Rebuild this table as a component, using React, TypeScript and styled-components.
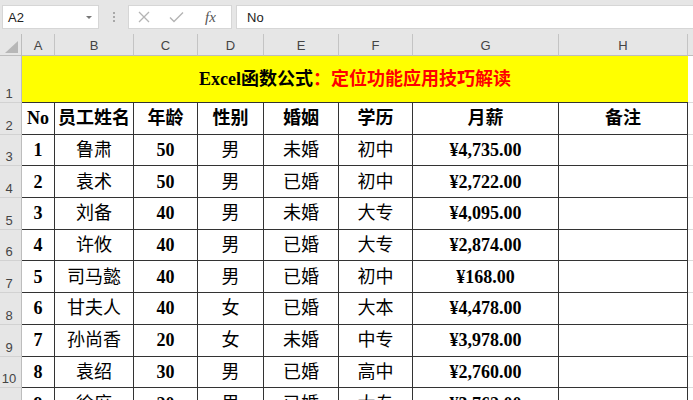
import React from "react";
import styled, { createGlobalStyle } from "styled-components";

const GlobalStyle = createGlobalStyle`
  html, body { margin: 0; padding: 0; background: #fff; }
  body {
    width: 693px; height: 400px; overflow: hidden;
    font-family: "Liberation Sans", Arial, sans-serif;
  }
  * { box-sizing: border-box; }
`;

const COLS = "22px 33px 79px 64px 66px 75px 74px 146px 129px 1fr";
const CELL_FONT = `"Liberation Serif", "Noto Sans CJK SC", serif`;

const Sheet = styled.div`
  width: 693px;
  height: 400px;
  overflow: hidden;
  background: #fff;
  display: flex;
  flex-direction: column;
`;

const FormulaBar = styled.div`
  flex: none;
  height: 34px;
  background: #e6e6e6;
  display: flex;
  align-items: flex-start;
  padding: 5px 0 0 2px;
`;

const NameBox = styled.div`
  width: 97px;
  height: 24px;
  background: #fff;
  border: 1px solid #d6d6d6;
  display: flex;
  align-items: center;
  justify-content: space-between;
  padding: 0 6px 0 5px;
  font-size: 13px;
  color: #222;
`;

const Caret = styled.span`
  width: 0;
  height: 0;
  border-left: 3px solid transparent;
  border-right: 3px solid transparent;
  border-top: 3px solid #777;
`;

const Grip = styled.div`
  width: 29px;
  height: 24px;
  display: flex;
  flex-direction: column;
  align-items: center;
  justify-content: center;
  gap: 2px;
`;

const GripDot = styled.span`
  width: 2px;
  height: 2px;
  background: #a8a8a8;
`;

const FxBox = styled.div`
  width: 104px;
  height: 24px;
  background: #fff;
  border: 1px solid #d6d6d6;
  display: flex;
  align-items: center;
  padding: 0 0 0 9px;
  gap: 19px;
`;

const FxLabel = styled.span`
  font-family: "Liberation Serif", serif;
  font-style: italic;
  font-size: 15px;
  color: #555;
  margin-left: 2px;
`;

const FormulaInput = styled.div`
  flex: 1;
  height: 24px;
  margin-left: 4px;
  background: #fff;
  border: 1px solid #d6d6d6;
  border-right: none;
  display: flex;
  align-items: center;
  padding-left: 10px;
  font-size: 13px;
  color: #222;
`;

const GridRow = styled.div<{ $h: number }>`
  flex: none;
  display: grid;
  grid-template-columns: ${COLS};
  height: ${(p) => p.$h}px;
`;

const Corner = styled.div`
  background: #e6e6e6;
  border-right: 1px solid #bdbdbd;
  border-bottom: 1px solid #bdbdbd;
  display: flex;
  align-items: flex-end;
  justify-content: flex-end;
  padding: 0 3px 2px 0;
`;

const ColHead = styled.div`
  background: #e6e6e6;
  border-right: 1px solid #c4c4c4;
  border-bottom: 1px solid #bdbdbd;
  display: flex;
  align-items: center;
  justify-content: center;
  font-size: 13px;
  color: #444;
  padding-top: 2px;
`;

const RowHead = styled.div`
  background: #e6e6e6;
  border-right: 1px solid #bdbdbd;
  border-bottom: 1px solid #d2d2d2;
  display: flex;
  align-items: flex-end;
  justify-content: center;
  padding: 0 3px 2px 0;
  font-size: 13px;
  line-height: 1;
  color: #444;
`;

const TitleCell = styled.div`
  grid-column: span 8;
  background: #ffff00;
  border-bottom: 1px solid #333;
  display: flex;
  align-items: center;
  justify-content: center;
  font-family: ${CELL_FONT};
  font-weight: 700;
  font-size: 18px;
  line-height: 1;
  color: #000;
  padding-bottom: 1px;
`;

const Red = styled.span`
  color: #ff0000;
`;

const Cell = styled.div<{ $bold?: boolean }>`
  border-right: 1px solid #333;
  border-bottom: 1px solid #333;
  display: flex;
  align-items: center;
  justify-content: center;
  font-family: ${CELL_FONT};
  font-weight: ${(p) => (p.$bold ? 700 : 400)};
  font-size: 18px;
  line-height: 1;
  color: #000;
  white-space: nowrap;
`;

const Filler = styled.div`
  border-bottom: 1px solid #dadada;
  background: #fff;
`;

const HeadFiller = styled.div`
  background: #e6e6e6;
  border-bottom: 1px solid #bdbdbd;
`;

const letters = ["A", "B", "C", "D", "E", "F", "G", "H"];
const headers = ["No", "员工姓名", "年龄", "性别", "婚姻", "学历", "月薪", "备注"];
const rows: string[][] = [
  ["1", "鲁肃", "50", "男", "未婚", "初中", "¥4,735.00"],
  ["2", "袁术", "50", "男", "已婚", "初中", "¥2,722.00"],
  ["3", "刘备", "40", "男", "未婚", "大专", "¥4,095.00"],
  ["4", "许攸", "40", "男", "已婚", "大专", "¥2,874.00"],
  ["5", "司马懿", "40", "男", "已婚", "初中", "¥168.00"],
  ["6", "甘夫人", "40", "女", "已婚", "大本", "¥4,478.00"],
  ["7", "孙尚香", "20", "女", "未婚", "中专", "¥3,978.00"],
  ["8", "袁绍", "30", "男", "已婚", "高中", "¥2,760.00"],
  ["9", "徐庶", "20", "男", "已婚", "大专", "¥3,762.00"],
];
const boldCols = [true, false, true, false, false, false, true, false];
const ROW_H = 31.7;

export default function App() {
  return (
    <>
      <GlobalStyle />
      <Sheet>
        <FormulaBar>
          <NameBox>
            <span>A2</span>
            <Caret />
          </NameBox>
          <Grip>
            <GripDot />
            <GripDot />
            <GripDot />
          </Grip>
          <FxBox>
            <svg width="12" height="12" viewBox="0 0 12 12">
              <path d="M1 1L11 11M11 1L1 11" stroke="#b4b4b4" strokeWidth="1.3" fill="none" />
            </svg>
            <svg width="15" height="12" viewBox="0 0 15 12">
              <path d="M1 6.5L5 10.5L14 1.5" stroke="#b4b4b4" strokeWidth="1.4" fill="none" />
            </svg>
            <FxLabel>fx</FxLabel>
          </FxBox>
          <FormulaInput>No</FormulaInput>
        </FormulaBar>

        <GridRow $h={22}>
          <Corner>
            <svg width="13" height="12" viewBox="0 0 13 12">
              <path d="M13 0L13 12L0 12Z" fill="#b7b7b7" />
            </svg>
          </Corner>
          {letters.map((l) => (
            <ColHead key={l}>{l}</ColHead>
          ))}
          <HeadFiller />
        </GridRow>

        <GridRow $h={47}>
          <RowHead>1</RowHead>
          <TitleCell>
            Excel函数公式<Red>：定位功能应用技巧解读</Red>
          </TitleCell>
          <Filler />
        </GridRow>

        <GridRow $h={ROW_H}>
          <RowHead>2</RowHead>
          {headers.map((h) => (
            <Cell key={h} $bold>
              {h}
            </Cell>
          ))}
          <Filler />
        </GridRow>

        {rows.map((r, i) => (
          <GridRow key={r[0]} $h={ROW_H}>
            <RowHead>{i + 3}</RowHead>
            {[...r, ""].map((v, j) => (
              <Cell key={j} $bold={boldCols[j]}>
                {v}
              </Cell>
            ))}
            <Filler />
          </GridRow>
        ))}
      </Sheet>
    </>
  );
}
